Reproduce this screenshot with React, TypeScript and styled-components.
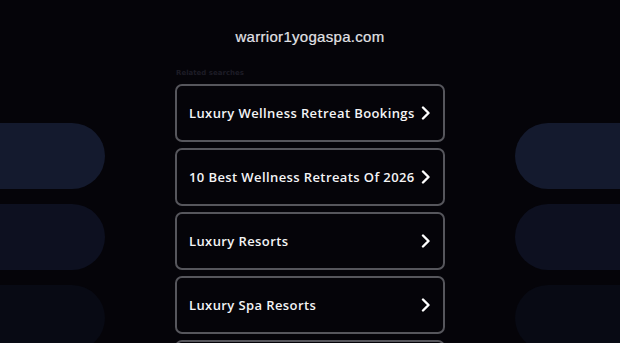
import { ReactElement } from 'react';
import styled, { createGlobalStyle } from 'styled-components';

const GlobalStyle = createGlobalStyle`
  html, body {
    margin: 0;
    padding: 0;
    background: #050409;
    overflow: hidden;
  }
`;

const searches = [
  'Luxury Wellness Retreat Bookings',
  '10 Best Wellness Retreats Of 2026',
  'Luxury Resorts',
  'Luxury Spa Resorts',
  'Wellness Retreats',
];

const pillShades = ['#141a2e', '#0d1020', '#080a14', '#05060d'];

const Chevron = () : ReactElement => (
  <svg width="10" height="14" viewBox="0 0 10 14" fill="none">
    <path d="M2 1.5 L7.5 7 L2 12.5" stroke="#fff" strokeWidth="2.4" strokeLinecap="round" strokeLinejoin="round" />
  </svg>
);

const App = () : ReactElement => (
  <>
    <GlobalStyle />
    <Page>
      <Side $side="left">
        {pillShades.map(c => <Pill key={c} $side="left" $shade={c} />)}
      </Side>
      <Main>
        <Domain>warrior1yogaspa.com</Domain>
        <List>
          <Label>Related searches</Label>
          {searches.map(s => (
            <Card key={s}>
              <CardText>{s}</CardText>
              <Chevron />
            </Card>
          ))}
        </List>
      </Main>
      <Side $side="right">
        {pillShades.map(c => <Pill key={c} $side="right" $shade={c} />)}
      </Side>
    </Page>
  </>
);

const Page = styled.div`
  display: grid;
  grid-template-columns: 105px 1fr 105px;
  width: 620px;
  height: 343px;
  overflow: hidden;
  background: #050409;
`;

const Side = styled.div<{ $side: 'left' | 'right' }>`
  display: flex;
  flex-direction: column;
  gap: 15px;
  padding-top: 123px;
  align-items: ${p => (p.$side === 'left' ? 'flex-start' : 'flex-end')};
`;

const Pill = styled.div<{ $side: 'left' | 'right'; $shade: string }>`
  width: 105px;
  height: 66px;
  flex-shrink: 0;
  background: ${p => p.$shade};
  border-radius: ${p => (p.$side === 'left' ? '0 33px 33px 0' : '33px 0 0 33px')};
`;

const Main = styled.div`
  display: flex;
  flex-direction: column;
  align-items: center;
`;

const Domain = styled.div`
  margin-top: 28px;
  font-family: "Liberation Sans", Arial, sans-serif;
  font-size: 15px;
  letter-spacing: 0.3px;
  color: #e2e2e6;
  line-height: 18px;
  -webkit-text-stroke: 0.2px #e2e2e6;
`;

const List = styled.div`
  width: 270px;
  margin-top: 22px;
  display: flex;
  flex-direction: column;
  gap: 6px;
`;

const Label = styled.div`
  font-family: "DejaVu Sans", sans-serif;
  font-size: 7px;
  font-weight: bold;
  color: #1d1c26;
  margin-left: 1px;
  line-height: 10px;
`;

const Card = styled.div`
  box-sizing: border-box;
  height: 58px;
  border: 2px solid #56565c;
  border-radius: 7px;
  display: flex;
  align-items: center;
  justify-content: space-between;
  padding: 0 12px 0 12px;
  flex-shrink: 0;
`;

const CardText = styled.span`
  font-family: "Open Sans", sans-serif;
  font-weight: 600;
  font-size: 13px;
  letter-spacing: 0.4px;
  color: #f4f4f6;
`;

export default App;
